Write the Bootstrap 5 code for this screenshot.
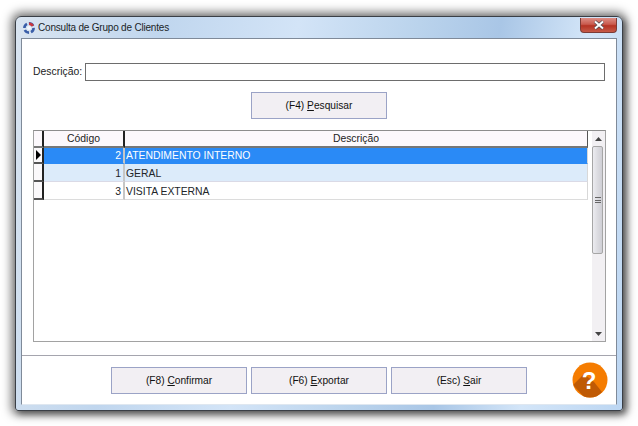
<!DOCTYPE html>
<html lang="pt">
<head>
<meta charset="utf-8">
<title>Consulta de Grupo de Clientes</title>
<link href="https://cdn.jsdelivr.net/npm/bootstrap@5.3.0/dist/css/bootstrap.min.css" rel="stylesheet">
<style>
html,body{height:426px;overflow:hidden;background:#fff}
body{font-family:"Liberation Sans",Arial,sans-serif;font-size:10.4px;color:#111;padding:16px 15px}
.win{height:395px;width:608px;border:1px solid #3a3f46;border-radius:6px 6px 3px 3px;box-shadow:0 0 10px 4px rgba(0,0,0,.5),3px 3px 6px rgba(0,0,0,.4);background:linear-gradient(100deg,#d9e4f0 0,#c0d6ee 22%,#d3e4f7 42%,#bad3ec 60%,#a9c6e6 72%,#d3e5f8 85%,#bcd6f2 100%);padding:0 5px 5px 5px}
.capt{height:21px;padding-left:1px;gap:2px}
.capt span{font-size:10px;color:#1a1f28;letter-spacing:-.02em}
.closebtn{width:37px;height:15px;margin-top:-5px;background:linear-gradient(#dd8f86 0,#c95a4e 45%,#b53324 55%,#c65a48 100%);border:1px solid #7b3b36;border-top:0;border-radius:0 0 4px 4px}
.client{height:367px;background:#fff;border:1px solid #7f8a99;border-bottom-color:#dfe7f0;padding-left:11px;padding-right:10px}
.fld{padding-top:24px;height:42px}
.fld label{font-size:10.4px;color:#222;width:52px;flex:none}
.fld input{width:520px;height:18px;border:1px solid #6d6d6d;border-radius:0;padding:0;flex:none}
.wbtn{width:136px;height:27px;flex:none;border:1px solid #9ba3c6;border-radius:0;background:#f2eff3;font-size:10.2px;color:#111;padding:0}
.wbtn:hover{background:#f2eff3;border-color:#9ba3c6;color:#111}
.wbtn u{text-underline-offset:1px}
.sbtn{margin-top:11px;padding-left:218px}
.gridbox{margin-top:11px;height:212px;width:573px;border:1px solid #a2a2a2;border-top-color:#8d8d8d;background:#fff}
.tbl{width:554px;flex:none}
.tbl table{width:554px;border-collapse:separate;border-spacing:0;table-layout:fixed;margin:0;--bs-table-bg:transparent}
.tbl th,.tbl td{padding:0 2px;height:17px;font-size:10.4px;line-height:15px;border:0;vertical-align:middle;font-weight:400;box-shadow:none}
.tbl th{height:17px;background:#fcf8fc;text-align:center;border-right:2px solid #222;border-bottom:2px solid #777;color:#222}
.tbl th:first-child{width:10px;padding:0}
.tbl th:nth-child(2){width:81px}
.tbl th:last-child{border-right:1px solid #555}
.tbl td.ind{padding:0;background:#fbf9fb;border-right:2px solid #222;border-bottom:2px solid #555;position:relative}
.tbl td.num{text-align:right;border-right:2px solid #c6c6c6;border-bottom:1px solid #dcdcdc;padding-top:2px}
.tbl td.txt{border-right:1px solid #d8d8d8;border-bottom:1px solid #dcdcdc;padding-left:1px;padding-top:2px}
.tbl .rsel td{height:16px}
.tbl .rsel td.num,.tbl .rsel td.txt{background:#2a8af6;color:#fff;border-bottom-color:#2a8af6;padding-top:0}
.tbl .ralt td.num,.tbl .ralt td.txt{background:#dcebfa;border-bottom:1px solid #dadae6}
.arrow{display:block;width:0;height:0;border-left:5px solid #000;border-top:5px solid transparent;border-bottom:5px solid transparent;margin-left:2px}
.sbar{width:13px;margin-left:4px;background:#f2f0f3;flex:none}
.sarrow{height:15px}
.thumb{height:108px;margin-right:2px;background:linear-gradient(90deg,#ececf0,#dcdce1 50%,#cfcfd5);border:1px solid #a6a6a6;border-radius:2px}
.grip{width:6px;height:6px;border-top:1px solid #666;border-bottom:1px solid #666;position:relative}
.grip:after{content:"";position:absolute;left:0;right:0;top:2px;height:1px;background:#666}
.sep{margin-top:13px;margin-left:-11px;margin-right:-10px;border-top:1px solid #a5a5ae;height:12px}
.actions{gap:4px;padding-left:78px}
.help{width:36px;height:36px;margin-left:41px;margin-top:-5px;flex:none}
.grow{flex:1 1 auto}
</style>
</head>
<body>
<div class="win d-flex flex-column">
  <div class="capt d-flex align-items-center">
    <svg width="14" height="14" viewBox="0 0 14 14"><circle cx="7" cy="7" r="4.600" fill="none" stroke="#3a5ea8" stroke-width="2.600" stroke-dasharray="5 2"/><path d="M7 1.500a5.500 5.500 0 0 1 5 3l-2.400 1a3 3 0 0 0-2.600-1.500z" fill="#c8373f"/><circle cx="7" cy="7" r="2" fill="#f4f7fb"/></svg>
    <span class="grow">Consulta de Grupo de Clientes</span>
    <div class="closebtn d-flex align-items-center justify-content-center">
      <svg width="12" height="10" viewBox="0 0 12 10"><path d="M2 1.500 10 8.500M10 1.500 2 8.500" stroke="#4d4d55" stroke-width="3.400"/><path d="M2 1.500 10 8.500M10 1.500 2 8.500" stroke="#fff" stroke-width="2"/></svg>
    </div>
  </div>
  <div class="client d-flex flex-column">
    <div class="fld d-flex align-items-center">
      <label for="d">Descrição:</label>
      <input id="d" class="form-control" type="text">
    </div>
    <div class="d-flex sbtn"><button class="btn wbtn" type="button">(F4) <u>P</u>esquisar</button></div>
    <div class="gridbox d-flex">
      <div class="tbl">
        <table class="table">
          <thead><tr><th></th><th>Código</th><th>Descrição</th></tr></thead>
          <tbody>
            <tr class="rsel"><td class="ind"><span class="arrow"></span></td><td class="num">2</td><td class="txt">ATENDIMENTO INTERNO</td></tr>
            <tr class="ralt"><td class="ind"></td><td class="num">1</td><td class="txt">GERAL</td></tr>
            <tr><td class="ind"></td><td class="num">3</td><td class="txt">VISITA EXTERNA</td></tr>
          </tbody>
        </table>
      </div>
      <div class="sbar d-flex flex-column">
        <div class="sarrow d-flex align-items-center justify-content-center"><svg width="7" height="4" viewBox="0 0 7 4"><path d="M3.500 0 7 4H0z" fill="#444"/></svg></div>
        <div class="thumb d-flex align-items-center justify-content-center"><div class="grip"></div></div>
        <div class="grow"></div>
        <div class="sarrow d-flex align-items-center justify-content-center"><svg width="7" height="4" viewBox="0 0 7 4"><path d="M0 0H7L3.500 4z" fill="#444"/></svg></div>
      </div>
    </div>
    <div class="sep"></div>
    <div class="actions d-flex">
      <button class="btn wbtn" type="button">(F8) <u>C</u>onfirmar</button>
      <button class="btn wbtn" type="button">(F6) <u>E</u>xportar</button>
      <button class="btn wbtn" type="button">(Esc) <u>S</u>air</button>
      <svg class="help" viewBox="0 0 36 36">
        <defs><clipPath id="hc"><circle cx="18" cy="18" r="17.500"/></clipPath></defs>
        <circle cx="18" cy="18" r="17.500" fill="#f57c00"/>
        <path d="M12 12 1 23 13 36H24L30 30 22 20z" fill="#bf5a05" clip-path="url(#hc)"/>
        <text x="17" y="27" text-anchor="middle" font-family="Liberation Sans" font-weight="700" font-size="24" fill="#fff">?</text>
      </svg>
    </div>
  </div>
</div>
<script src="https://cdn.jsdelivr.net/npm/bootstrap@5.3.0/dist/js/bootstrap.bundle.min.js"></script>
</body>
</html>
